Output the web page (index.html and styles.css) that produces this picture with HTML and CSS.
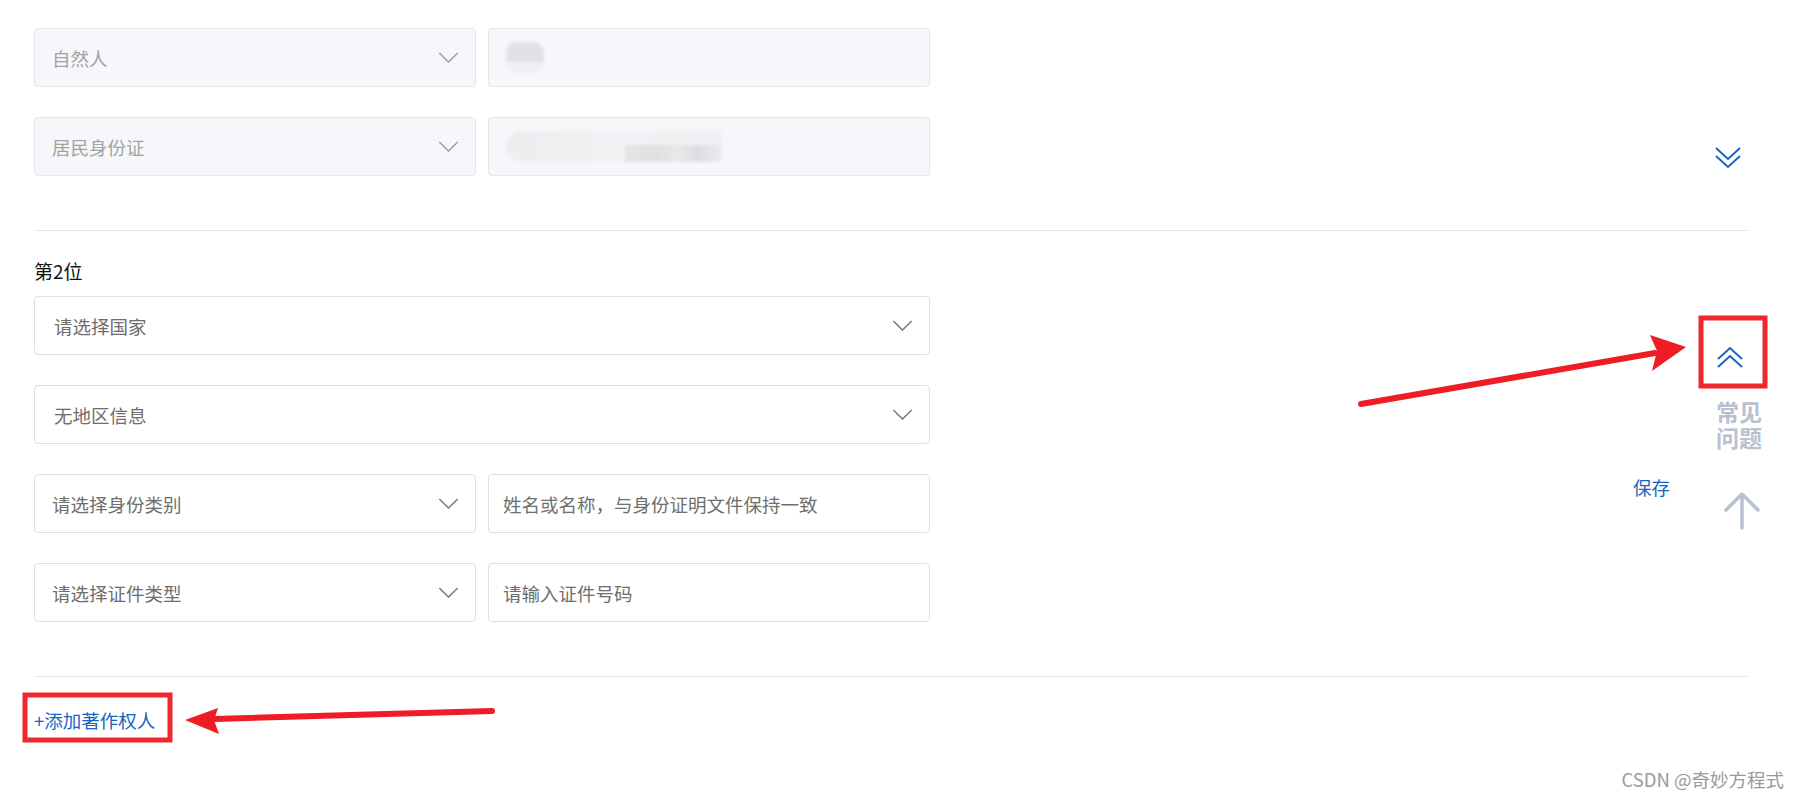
FILE: index.html
```html
<!DOCTYPE html>
<html lang="zh-CN">
<head>
    <meta charset="UTF-8">
    <title>著作权人信息</title>
    <link rel="stylesheet" href="styles.css">
</head>
<body>
    <div class="page">
        <!-- 第1位：已填写，只读 -->
        <section class="owner">
            <div class="field-row">
                <div class="select is-disabled">
                    <span>自然人</span>
                    <svg class="caret" viewBox="0 0 22 12"><path d="M1 1 L11 11 L21 1"/></svg>
                </div>
                <div class="input is-disabled">
                    <span class="blur blur-short"></span>
                </div>
            </div>
            <div class="field-row">
                <div class="select is-disabled">
                    <span>居民身份证</span>
                    <svg class="caret" viewBox="0 0 22 12"><path d="M1 1 L11 11 L21 1"/></svg>
                </div>
                <div class="input is-disabled">
                    <span class="blur blur-long"></span>
                </div>
            </div>
        </section>

        <!-- 第2位 -->
        <section class="owner">
            <div class="owner-title">第2位</div>
            <div class="field-row">
                <div class="select wide">
                    <span>请选择国家</span>
                    <svg class="caret" viewBox="0 0 22 12"><path d="M1 1 L11 11 L21 1"/></svg>
                </div>
            </div>
            <div class="field-row">
                <div class="select wide">
                    <span>无地区信息</span>
                    <svg class="caret" viewBox="0 0 22 12"><path d="M1 1 L11 11 L21 1"/></svg>
                </div>
            </div>
            <div class="field-row">
                <div class="select">
                    <span>请选择身份类别</span>
                    <svg class="caret" viewBox="0 0 22 12"><path d="M1 1 L11 11 L21 1"/></svg>
                </div>
                <div class="input"><span>姓名或名称，与身份证明文件保持一致</span></div>
            </div>
            <div class="field-row">
                <div class="select">
                    <span>请选择证件类型</span>
                    <svg class="caret" viewBox="0 0 22 12"><path d="M1 1 L11 11 L21 1"/></svg>
                </div>
                <div class="input"><span>请输入证件号码</span></div>
            </div>
        </section>

        <div class="add-owner">+添加著作权人</div>
    </div>

    <!-- 右侧浮动工具 -->
    <svg class="fold fold-down" viewBox="0 0 28 24">
        <path d="M2 2 L14 13 L26 2"/>
        <path d="M2 10 L14 21 L26 10"/>
    </svg>
    <svg class="fold fold-up" viewBox="0 0 28 24">
        <path d="M2 14 L14 3 L26 14"/>
        <path d="M2 22 L14 11 L26 22"/>
    </svg>
    <div class="faq">
        <div>常见</div>
        <div>问题</div>
    </div>
    <div class="save">保存</div>
    <svg class="to-top" viewBox="0 0 40 40">
        <path d="M20 38 V4 M4 20 L20 4 L36 20"/>
    </svg>

    <!-- 标注 -->
    <svg class="marks" viewBox="0 0 1800 800">
        <rect x="1701" y="318" width="64" height="68" class="mark-box"/>
        <rect x="25" y="695" width="145" height="45" class="mark-box"/>
        <path class="mark-line" d="M1361 404 L1655 353"/>
        <path class="mark-head" d="M1686 347 L1650 335 L1657 351 L1652 371 Z"/>
        <path class="mark-line" d="M492 711 L215 719"/>
        <path class="mark-head" d="M185 720 L218 708 L214 720 L219 734 Z"/>
    </svg>

    <div class="watermark">CSDN @奇妙方程式</div>
</body>
</html>
```

FILE: styles.css
```css
body {
    margin: 0;
    background-color: #fff;
    font-family: "Noto Sans CJK SC", "Liberation Sans", sans-serif;
    color: #303133;
    width: 1800px;
    height: 800px;
    overflow: hidden;
    position: relative;
}

.page {
    padding: 28px 52px 0 34px;
}

.owner {
    padding-bottom: 24px;
    border-bottom: 1px solid #e4e7ed;
}

.owner + .owner {
    padding-top: 27px;
}

.owner-title {
    font-size: 19px;
    line-height: 26px;
    color: #111;
    margin-bottom: 12px;
}

.field-row {
    display: flex;
    gap: 12px;
    width: 896px;
    margin-bottom: 30px;
}

.select, .input {
    box-sizing: border-box;
    height: 59px;
    width: 442px;
    border: 1px solid #dcdfe6;
    border-radius: 4px;
    background-color: #fff;
    display: flex;
    align-items: center;
    font-size: 18.5px;
    color: #6e6e6e;
}

.select {
    padding: 0 16px 0 17px;
    justify-content: space-between;
}

.select.wide {
    width: 896px;
    padding-left: 19px;
}

.input {
    padding: 0 14px;
}

.is-disabled {
    background-color: #f5f7fa;
    border-color: #e4e7ed;
    color: #a3a3a3;
}

.caret {
    width: 21px;
    height: 11px;
    fill: none;
    stroke: #7a7a7a;
    stroke-width: 1.6;
}

.is-disabled .caret {
    stroke: #a0a0a0;
}

.blur {
    display: block;
    height: 31px;
    border-radius: 10px;
    filter: blur(1.5px);
}

.blur-short {
    width: 38px;
    margin-left: 3px;
    background: linear-gradient(#e1e2e5 65%, #eeeff1 65%);
}

.blur-long {
    width: 216px;
    margin-left: 3px;
    border-radius: 16px 4px 4px 16px;
    background:
        linear-gradient(90deg, transparent 0, transparent 55%, #e4e5e7 55%, #dfe0e2 70%, #e8e9eb 80%, #dcdde0 88%, #e9eaec 100%) bottom / 100% 55% no-repeat,
        linear-gradient(90deg, #ecedef, #f0f1f3 50%, #eeeff1 100%);
}

.add-owner {
    margin-top: 30px;
    font-size: 18.5px;
    line-height: 26px;
    color: #1566c0;
}

/* 右侧浮动工具 */
.fold {
    position: absolute;
    width: 28px;
    height: 24px;
    fill: none;
    stroke: #1566c0;
    stroke-width: 2;
}

.fold-down {
    left: 1714px;
    top: 146px;
}

.fold-up {
    left: 1716px;
    top: 345px;
}

.faq {
    position: absolute;
    left: 1716px;
    top: 398px;
    font-size: 23px;
    line-height: 26px;
    font-weight: bold;
    color: #b9c0d2;
}

.save {
    position: absolute;
    left: 1633px;
    top: 474px;
    font-size: 18.5px;
    line-height: 26px;
    color: #1566c0;
}

.to-top {
    position: absolute;
    left: 1722px;
    top: 490px;
    width: 40px;
    height: 40px;
    fill: none;
    stroke: #b9c0d2;
    stroke-width: 3.5;
    stroke-linecap: round;
    stroke-linejoin: round;
}

/* 标注 */
.marks {
    position: absolute;
    left: 0;
    top: 0;
    width: 1800px;
    height: 800px;
    pointer-events: none;
}

.mark-box {
    fill: none;
    stroke: #f0282e;
    stroke-width: 5;
}

.mark-line {
    fill: none;
    stroke: #ee1c25;
    stroke-width: 6;
    stroke-linecap: round;
}

.mark-head {
    fill: #ee1c25;
}

.watermark {
    position: absolute;
    right: 16px;
    bottom: 8px;
    font-size: 18.5px;
    color: #9a9a9a;
    text-shadow: 0 0 1px #fff;
}
```
